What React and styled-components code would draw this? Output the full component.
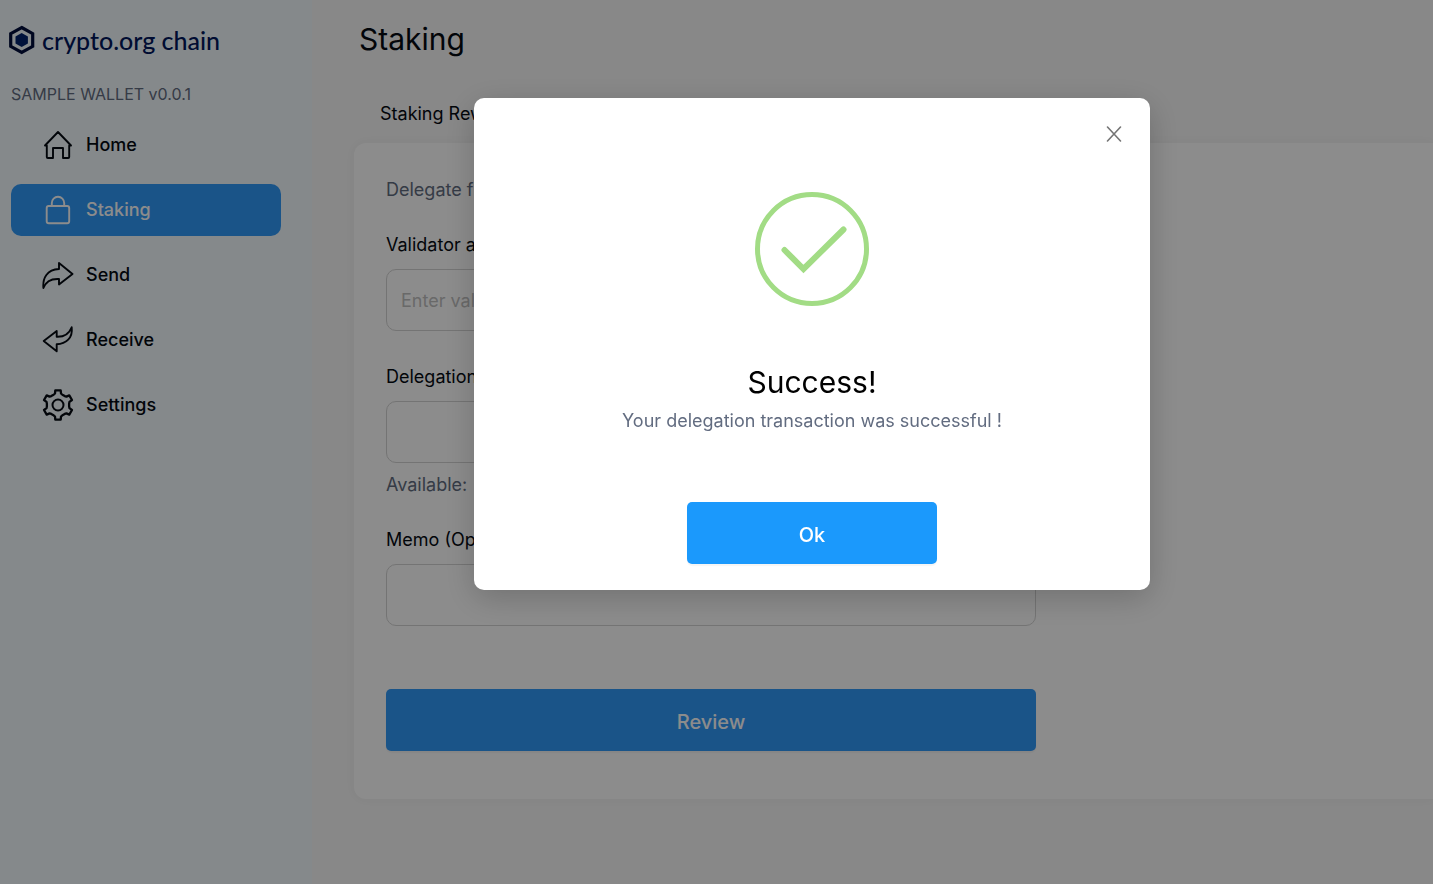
import React from "react";
import styled, { createGlobalStyle } from "styled-components";

const GlobalStyle = createGlobalStyle`
  * { box-sizing: border-box; }
  body {
    margin: 0;
    background: #f7f7f7;
    color: #050a12;
    font-family: Inter, "Liberation Sans", sans-serif;
    font-size: 18px;
    line-height: 28px;
  }
  button, input { font: inherit; }
  h1, h2, p { margin: 0; font-weight: 400; }
`;

const Page = styled.div`
  display: flex;
  min-height: 100vh;
`;

const Sidebar = styled.aside`
  flex: 0 0 312px;
  padding: 24px 0 0 8px;
  background: #f3fafe;
`;

const Logo = styled.a`
  display: flex;
  align-items: center;
  gap: 6px;
  height: 32px;
  color: #00165c;
  font: 500 25px/30px Lato, sans-serif;
  text-decoration: none;
`;

const Version = styled.p`
  margin: 24px 0 11px 3px;
  color: #626c80;
  font-size: 16px;
`;

const Nav = styled.nav`
  display: flex;
  flex-direction: column;
  gap: 13px;
  width: 273px;
  padding-left: 3px;
`;

const NavLink = styled.a`
  display: flex;
  align-items: center;
  gap: 12px;
  height: 52px;
  padding-left: 31px;
  border-radius: 10px;
  background: ${(p) => (p.$active ? "#3199f8" : "transparent")};
  color: ${(p) => (p.$active ? "#ffffff" : "#050a12")};
  font-weight: 500;
  text-decoration: none;
`;

const Icon = styled.svg`
  flex: none;
  fill: none;
  stroke: currentColor;
  stroke-linejoin: round;
  stroke-linecap: round;
`;

const Main = styled.main`
  flex: 1;
  min-width: 0;
  padding: 19px 0 0 42px;
`;

const Title = styled.h1`
  padding-left: 5px;
  font-size: 30px;
  line-height: 40px;
`;

const Tabs = styled.div`
  display: flex;
  gap: 32px;
  padding: 41px 0 15px 26px;
`;

const Tab = styled.button`
  padding: 0;
  border: 0;
  background: none;
  color: inherit;
`;

const Card = styled.section`
  padding: 33px 0 48px 32px;
  border-radius: 12px 0 0 12px;
  background: #ffffff;
  box-shadow: 0 0 12px rgba(0, 0, 0, 0.03);
`;

const Form = styled.form`
  display: flex;
  flex-direction: column;
  max-width: 650px;
`;

const Muted = styled.p`
  color: #626c80;
`;

const Field = styled.div`
  display: flex;
  flex-direction: column;
  gap: 10px;
  margin-top: ${(p) => p.$top}px;
`;

const Input = styled.input`
  height: 62px;
  padding: 0 14px;
  border: 1px solid #d4d4d4;
  border-radius: 10px;
  background: #ffffff;
  &::placeholder { color: #bfbfbf; opacity: 1; }
`;

const Available = styled(Muted)`
  margin-top: 8px;
`;

const PrimaryButton = styled.button`
  height: 62px;
  padding: 4px 0 0;
  border: 0;
  border-radius: 5px;
  background: ${(p) => p.$color};
  color: #ffffff;
  font-size: 20px;
  font-weight: 500;
  box-shadow: 0 2px 1px rgba(0, 0, 0, 0.04);
`;

const ReviewButton = styled(PrimaryButton)`
  margin-top: 63px;
`;

const Overlay = styled.div`
  position: fixed;
  inset: 0;
  display: flex;
  justify-content: center;
  align-items: flex-start;
  padding: 98px 0 0 191px;
  background: rgba(0, 0, 0, 0.45);
`;

const Dialog = styled.div`
  display: flex;
  flex-direction: column;
  align-items: center;
  width: 676px;
  padding: 20px 20px 26px;
  border-radius: 10px;
  background: #ffffff;
  box-shadow: 0 8px 32px rgba(0, 0, 0, 0.2);
`;

const CloseButton = styled.button`
  display: flex;
  align-self: flex-end;
  padding: 8px;
  border: 0;
  background: none;
  color: #757575;
`;

const SuccessMark = styled(Icon)`
  margin-top: 42px;
  color: #a2dc85;
  stroke-linejoin: miter;
`;

const DialogTitle = styled.h2`
  margin-top: 56px;
  font-size: 30px;
  line-height: 40px;
  color: #000000;
`;

const Message = styled(Muted)`
  margin: 5px 0 67px;
`;

const OkButton = styled(PrimaryButton)`
  width: 250px;
`;

const rotate = (x, y, deg) => {
  const a = (deg * Math.PI) / 180;
  return `${(16 + x * Math.cos(a) - y * Math.sin(a)).toFixed(2)} ${(16 + x * Math.sin(a) + y * Math.cos(a)).toFixed(2)}`;
};

const tooth = [[-4.4, -10.3], [-3, -11.5], [-2.7, -14.6], [2.7, -14.6], [3, -11.5], [4.4, -10.3]];

const gear =
  "M" +
  [0, 60, 120, 180, 240, 300]
    .map((deg) => tooth.map(([x, y]) => rotate(x, y, deg)).join("L"))
    .join("L") +
  "Z";

const icons = {
  home: <path d="M3 16.5 16 3l13 13.5h-1.8V28q0 1-1 1H21V19H11v10H5.800q-1 0-1-1V16.500Z" />,
  lock: (
    <>
      <rect x="4.7" y="12" width="22.5" height="17.3" rx="2" />
      <path d="M9.8 12V9a6.2 6.2 0 0 1 12.4 0v3" />
    </>
  ),
  send: <path d="M17 4 30.5 15 17 25.5V20C9 19.5 4 22 1.4 29 .5 19 5 10.500 17 10Z" />,
  receive: <path d="M14.7 7 1.7 17l13 10.3v-7C24 20 31 14 29.7 3.3 27 10 22 13 14.7 12.7Z" />,
  gear: (
    <>
      <path d={gear} strokeWidth="2.3" />
      <circle cx="16" cy="16" r="5.5" strokeWidth="2" />
    </>
  ),
};

const links = [
  ["Home", "home"],
  ["Staking", "lock"],
  ["Send", "send"],
  ["Receive", "receive"],
  ["Settings", "gear"],
];

export default function App() {
  return (
    <>
      <GlobalStyle />
      <Page>
        <Sidebar>
          <Logo href="#">
            <svg width="28" height="32" viewBox="0 0 28 32" aria-hidden="true">
              <path d="M13.7 3.500 24.700 9.700v12.600L13.700 28.500 2.700 22.300V9.700Z" fill="none" stroke="#000d3b" strokeWidth="3.2" />
              <path d="M13.700 9 19.900 12.500v7l-6.200 3.500-6.200-3.500v-7Z" fill="#00226c" />
            </svg>
            crypto.org chain
          </Logo>
          <Version>SAMPLE WALLET v0.0.1</Version>
          <Nav>
            {links.map(([label, icon]) => (
              <NavLink key={label} href="#" $active={label === "Staking"}>
                <Icon width="32" height="32" viewBox="0 0 32 32" strokeWidth="1.9" aria-hidden="true">
                  {icons[icon]}
                </Icon>
                {label}
              </NavLink>
            ))}
          </Nav>
        </Sidebar>
        <Main>
          <Title>Staking</Title>
          <Tabs>
            <Tab type="button">Staking Rewards</Tab>
          </Tabs>
          <Card>
            <Form>
              <Muted>Delegate funds to validator</Muted>
              <Field $top={27}>
                <label htmlFor="validator">Validator address</label>
                <Input id="validator" placeholder="Enter validator address" />
              </Field>
              <Field $top={32}>
                <label htmlFor="amount">Delegation Amount</label>
                <Input id="amount" />
              </Field>
              <Available>Available:</Available>
              <Field $top={27}>
                <label htmlFor="memo">Memo (Optional)</label>
                <Input id="memo" />
              </Field>
              <ReviewButton type="button" $color="#3199f8">Review</ReviewButton>
            </Form>
          </Card>
        </Main>
      </Page>
      <Overlay>
        <Dialog role="dialog" aria-modal="true" aria-labelledby="dialog-title">
          <CloseButton type="button" aria-label="Close">
            <Icon width="16" height="16" viewBox="0 0 16 16" strokeWidth="1.6">
              <path d="M1.500 1 14.500 15M14.500 1 1.500 15" />
            </Icon>
          </CloseButton>
          <SuccessMark width="114" height="114" viewBox="0 0 114 114" aria-hidden="true">
            <circle cx="57" cy="57" r="54.5" strokeWidth="5" />
            <path d="M29.500 58 48.500 77 88.500 37.500" strokeWidth="6" />
          </SuccessMark>
          <DialogTitle id="dialog-title">Success!</DialogTitle>
          <Message>Your delegation transaction was successful !</Message>
          <OkButton type="button" $color="#1b99fc">Ok</OkButton>
        </Dialog>
      </Overlay>
    </>
  );
}
